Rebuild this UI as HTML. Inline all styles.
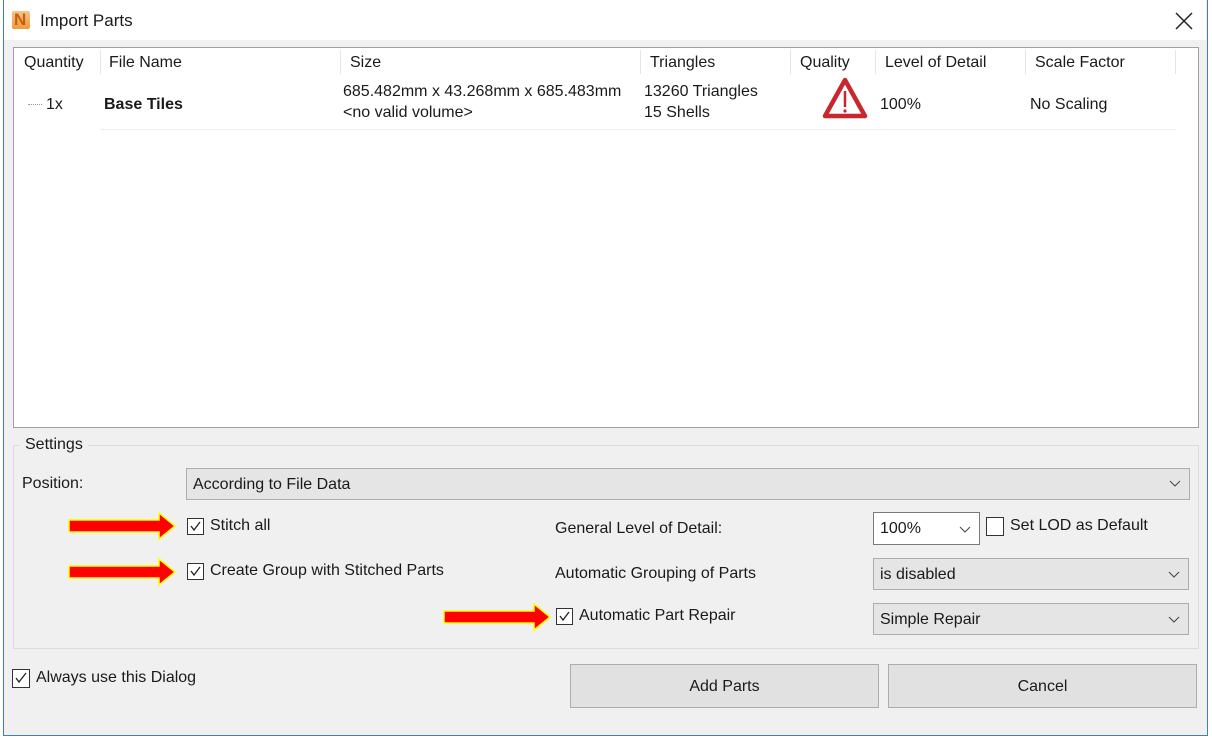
<!DOCTYPE html>
<html><head><style>
body{margin:0;width:1212px;height:740px;background:#fff;font-family:"Liberation Sans",sans-serif;font-size:16px;color:#1a1a1a;position:relative;overflow:hidden}
.a{position:absolute}
.win{left:3px;top:0;width:1203px;height:735px;border:1px solid #3c7fc4;border-top:none;background:#f0f0f0}
.title{left:4px;top:0;width:1202px;height:40px;background:#fff}
.list{left:13px;top:47px;width:1184px;height:379px;background:#fff;border:1px solid #a0a0a0}
.hd{top:54px;font-size:16px}
.sep{top:50px;width:1px;height:24px;background:#e5e5e5}
.cb{width:15px;height:15px;border:1px solid #333;background:#fff}
.cb svg{position:absolute;left:1px;top:1px}
.combo{background:#e5e5e5;border:1px solid #adadad;height:30px;line-height:30px;padding-left:6px;box-sizing:border-box}
.chev{position:absolute;right:8px;top:11px}
.btn{background:#e1e1e1;border:1px solid #adadad;height:44px;line-height:44px;text-align:center;box-sizing:border-box}
</style></head><body>
<div class="a win"></div>
<div class="a title"></div>
<div class="a" style="left:12px;top:11px;width:18px;height:18px;background:linear-gradient(#f6c48a,#f19a3b);border-radius:2px"></div>
<div class="a" style="left:14px;top:10px;font-weight:bold;color:#c4600c;font-size:17px">N</div>
<div class="a" style="left:40px;top:11px;font-size:17px">Import Parts</div>
<svg class="a" style="left:1175px;top:12px" width="18" height="18"><path d="M1 1L17 17M17 1L1 17" stroke="#222" stroke-width="1.5"/></svg>
<div class="a list"></div>
<div class="a hd" style="left:24px">Quantity</div>
<div class="a sep" style="left:100px"></div>
<div class="a hd" style="left:109px">File Name</div>
<div class="a sep" style="left:340px"></div>
<div class="a hd" style="left:350px">Size</div>
<div class="a sep" style="left:640px"></div>
<div class="a hd" style="left:650px">Triangles</div>
<div class="a sep" style="left:790px"></div>
<div class="a hd" style="left:800px">Quality</div>
<div class="a sep" style="left:875px"></div>
<div class="a hd" style="left:885px">Level of Detail</div>
<div class="a sep" style="left:1025px"></div>
<div class="a hd" style="left:1035px">Scale Factor</div>
<div class="a sep" style="left:1175px"></div>
<div class="a" style="left:28px;top:104px;width:14px;border-top:1px dotted #999"></div>
<div class="a" style="left:46px;top:96px">1x</div>
<div class="a" style="left:104px;top:96px;font-weight:bold">Base Tiles</div>
<div class="a" style="left:343px;top:81px;line-height:21px">685.482mm x 43.268mm x 685.483mm<br>&lt;no valid volume&gt;</div>
<div class="a" style="left:644px;top:81px;line-height:21px">13260 Triangles<br>15 Shells</div>
<svg class="a" style="left:822px;top:76px" width="46" height="44"><path d="M23 4L43 40H3Z" fill="#fff" stroke="#c8272d" stroke-width="4.5" stroke-linejoin="round"/><path d="M23 15V31" stroke="#c8272d" stroke-width="2.5"/><circle cx="23" cy="35" r="1.6" fill="#c8272d"/></svg>
<div class="a" style="left:880px;top:96px">100%</div>
<div class="a" style="left:1030px;top:96px">No Scaling</div>
<div class="a" style="left:100px;top:129px;width:1076px;height:1px;background:#eee"></div>
<div class="a" style="left:13px;top:445px;width:1184px;height:202px;border:1px solid #dcdcdc"></div>
<div class="a" style="left:20px;top:436px;background:#f0f0f0;padding:0 5px">Settings</div>
<div class="a" style="left:22px;top:475px">Position:</div>
<div class="a combo" style="left:186px;top:468px;width:1004px;height:32px;line-height:32px">According to File Data<svg class="chev" width="12" height="8"><path d="M1 1L6 6L11 1" stroke="#444" fill="none"/></svg></div>
<svg class="a" style="left:62px;top:510px" width="120" height="34"><path d="M7 10H97V3L113 16L97 29V22H7Z" fill="#f00" stroke="#ff0" stroke-width="1.5"/></svg>
<svg class="a" style="left:62px;top:556px" width="120" height="34"><path d="M7 10H97V3L113 16L97 29V22H7Z" fill="#f00" stroke="#ff0" stroke-width="1.5"/></svg>
<svg class="a" style="left:437px;top:601px" width="120" height="34"><path d="M7 10H97V3L113 16L97 29V22H7Z" fill="#f00" stroke="#ff0" stroke-width="1.5"/></svg>
<div class="a cb" style="left:187px;top:518px"><svg width="13" height="13"><path d="M2 6L5 10L11 2" stroke="#222" fill="none" stroke-width="1.3"/></svg></div>
<div class="a" style="left:210px;top:517px">Stitch all</div>
<div class="a cb" style="left:187px;top:563px"><svg width="13" height="13"><path d="M2 6L5 10L11 2" stroke="#222" fill="none" stroke-width="1.3"/></svg></div>
<div class="a" style="left:210px;top:562px">Create Group with Stitched Parts</div>
<div class="a cb" style="left:556px;top:608px"><svg width="13" height="13"><path d="M2 6L5 10L11 2" stroke="#222" fill="none" stroke-width="1.3"/></svg></div>
<div class="a" style="left:579px;top:607px">Automatic Part Repair</div>
<div class="a" style="left:555px;top:520px">General Level of Detail:</div>
<div class="a" style="left:555px;top:565px">Automatic Grouping of Parts</div>
<div class="a combo" style="left:873px;top:512px;width:107px;height:33px;line-height:31px;background:#fff;border-color:#7a7a7a">100%<svg class="chev" style="top:13px" width="12" height="8"><path d="M1 1L6 6L11 1" stroke="#444" fill="none"/></svg></div>
<div class="a cb" style="left:986px;top:517px;width:16px;height:17px"></div>
<div class="a" style="left:1010px;top:517px">Set LOD as Default</div>
<div class="a combo" style="left:873px;top:558px;width:316px;height:32px;line-height:32px">is disabled<svg class="chev" style="top:12px" width="12" height="8"><path d="M1 1L6 6L11 1" stroke="#444" fill="none"/></svg></div>
<div class="a combo" style="left:873px;top:603px;width:316px;height:32px;line-height:32px">Simple Repair<svg class="chev" style="top:12px" width="12" height="8"><path d="M1 1L6 6L11 1" stroke="#444" fill="none"/></svg></div>
<div class="a cb" style="left:12px;top:669px;width:16px;height:17px"><svg width="14" height="14"><path d="M2 7L5 11L12 2" stroke="#222" fill="none" stroke-width="1.3"/></svg></div>
<div class="a" style="left:36px;top:669px">Always use this Dialog</div>
<div class="a btn" style="left:570px;top:664px;width:309px">Add Parts</div>
<div class="a btn" style="left:888px;top:664px;width:309px">Cancel</div>
</body></html>
